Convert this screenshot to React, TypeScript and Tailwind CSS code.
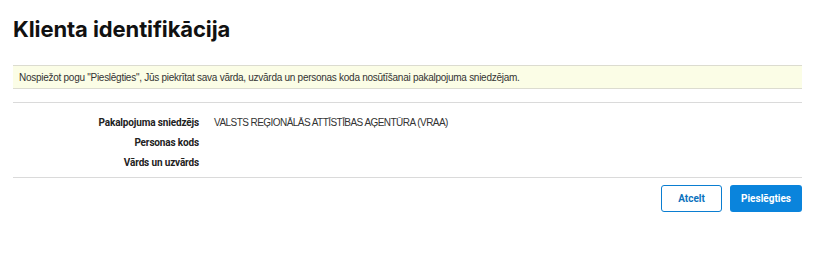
const rows = [
  { label: "Pakalpojuma sniedzējs", value: "VALSTS REĢIONĀLĀS ATTĪSTĪBAS AĢENTŪRA (VRAA)" },
  { label: "Personas kods", value: "" },
  { label: "Vārds un uzvārds", value: "" },
];

const App = () => {
  return (
    <div className="w-[830px] h-[259px] bg-white px-[13px] pt-[14px] text-[#222] font-['Roboto',sans-serif]">
      {/* Title */}
      <h1 className="text-[22px] leading-[30px] font-bold text-[#111] font-['Inter',sans-serif] tracking-[-0.1px]">
        Klienta identifikācija
      </h1>

      {/* Notice */}
      <div className="w-[789px] mt-[21px] h-[24px] flex items-center px-[6px] bg-[#fbfde6] border-y border-[#dcdcd0] text-[10px] tracking-[-0.27px] text-[#333] font-['Liberation_Sans',sans-serif]">
        Nospiežot pogu "Pieslēgties", Jūs piekrītat sava vārda, uzvārda un personas koda nosūtīšanai pakalpojuma sniedzējam.
      </div>

      {/* Details */}
      <div className="w-[789px] mt-[13px] border-y border-[#dadada] pt-[9px] pb-[5px]">
        {rows.map((r) => (
          <div key={r.label} className="flex h-[20px] items-center">
            <div className="w-[186px] text-right text-[10px] font-bold tracking-[-0.15px] text-[#222]">{r.label}</div>
            <div className="ml-[15px] text-[10px] tracking-[-0.55px] text-[#333] font-['Liberation_Sans',sans-serif]">{r.value}</div>
          </div>
        ))}
      </div>

      {/* Actions */}
      <div className="w-[789px] mt-[7px] flex justify-end gap-[8px]">
        <button className="w-[61px] h-[27px] rounded-[3px] border border-[#0b7ed1] bg-white text-[#0b72bd] text-[10px] font-bold">
          Atcelt
        </button>
        <button className="w-[72px] h-[27px] rounded-[3px] bg-[#0a84dc] text-white text-[10px] font-bold">
          Pieslēgties
        </button>
      </div>
    </div>
  );
};

export default App;
